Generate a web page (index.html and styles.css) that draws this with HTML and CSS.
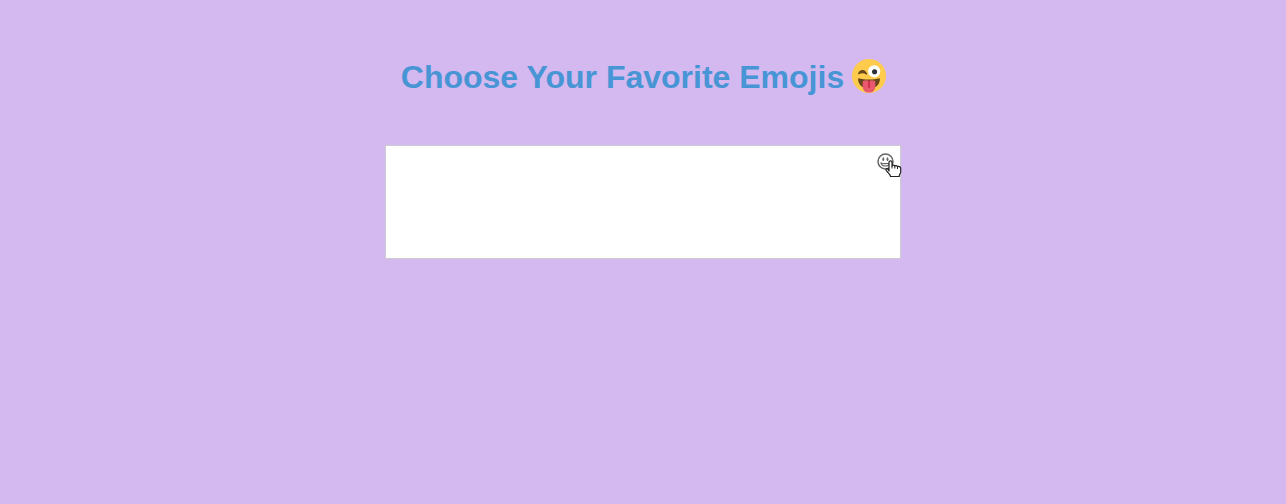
FILE: index.html
```html
<!DOCTYPE html>
<html lang="en">
<head>
<meta charset="utf-8">
<title>Choose Your Favorite Emojis</title>
<link rel="stylesheet" href="styles.css">
</head>
<body>
<main class="page">
  <h1 class="title"><span class="title-text">Choose Your Favorite Emojis</span>
    <svg class="wink" viewBox="0 0 36 36" aria-hidden="true">
      <circle cx="18" cy="18" r="18" fill="#ffcb4c"/>
      <path d="M6.500 20.500c3.500 1 7.500 1.300 11.500 1.300s8-.3 11.500-1.300c.5 6.500-4.500 11-11.500 11S6 27 6.500 20.500z" fill="#65471b"/>
      <path d="M11.300 23.500c2-1.300 4.700-1.300 6.700-.5 2-.8 4.700-.8 6.700.5V28.500c0 4.500-2.700 7-6.700 7s-6.700-2.500-6.700-7z" fill="#e8596e"/>
      <path d="M18 23.500v6.500" stroke="#be1931" stroke-width="1.300" stroke-linecap="round"/>
      <path d="M7 15.500c2.300-4.500 6.500-4 8.500.5-2.500-1.800-5.500-2-8.500-.5z" fill="#65471b" stroke="#65471b" stroke-width="1.200" stroke-linejoin="round"/>
      <circle cx="23.500" cy="13" r="6.500" fill="#fff"/>
      <circle cx="23.900" cy="13.500" r="2.700" fill="#292f33"/>
    </svg>
  </h1>
  <div class="editor">
    <div class="input" contenteditable="true" role="textbox" aria-label="Message"></div>
    <svg class="picker" viewBox="0 0 17 17" aria-hidden="true">
      <g fill="none" stroke="#666" stroke-width="1.500">
        <circle cx="8.500" cy="8.500" r="7.500"/>
        <path d="M4 10c3 .8 6 .8 9 0-.6 2-2.200 3-4.500 3S4.600 12 4 10z" stroke-width="1.100"/>
      </g>
      <ellipse cx="6.300" cy="6.200" rx=".95" ry="1.900" fill="#666"/>
      <ellipse cx="10.500" cy="6.200" rx=".95" ry="1.900" fill="#666"/>
    </svg>
    <svg class="cursor" viewBox="0 0 18 18" aria-hidden="true">
      <path d="M5 11V2.300C5 .4 8 .4 8 2.300V6C8.300 4.600 10.600 4.800 10.800 6.300 11.300 5.200 13.300 5.500 13.500 6.900 14.200 6 16.700 6.500 16.700 8.300V12C16.700 13.500 15.200 14.300 15.200 16.500H6.500C6.300 14.500 4.500 13.200 3 11.500 1 9.700 2.300 7.700 4 9.300z" fill="#fff" stroke="#222" stroke-width="1.200" stroke-linejoin="round"/>
      <path d="M8 6v2.500M10.800 6.500v2M13.500 7v2" stroke="#222"/>
    </svg>
  </div>
</main>
</body>
</html>
```
FILE: styles.css
```css
body {
  margin: 0;
  min-height: 100vh;
  background: #d3b9ef;
  font-family: "Liberation Sans", Arial, sans-serif;
}

.page {
  display: flex;
  flex-direction: column;
  align-items: center;
  padding-top: 59px;
}

.title {
  display: flex;
  align-items: flex-start;
  gap: 8px;
  height: 36px;
  margin: 0 0 50px;
  padding-left: 1px;
  color: #4795d5;
  font-size: 32px;
  line-height: 36px;
  white-space: nowrap;
}

.wink {
  width: 34px;
  height: 34px;
}

.editor {
  position: relative;
  box-sizing: border-box;
  width: 516px;
  height: 114px;
  border: 1px solid #ccc;
  background: #fff;
}

.input {
  height: 100%;
  box-sizing: border-box;
  padding: 6px 34px 6px 12px;
  outline: none;
}

.picker {
  position: absolute;
  top: 7px;
  right: 6px;
  width: 17px;
  height: 17px;
}

.cursor {
  position: absolute;
  top: 14px;
  right: -2px;
  width: 18px;
  height: 18px;
}
```
